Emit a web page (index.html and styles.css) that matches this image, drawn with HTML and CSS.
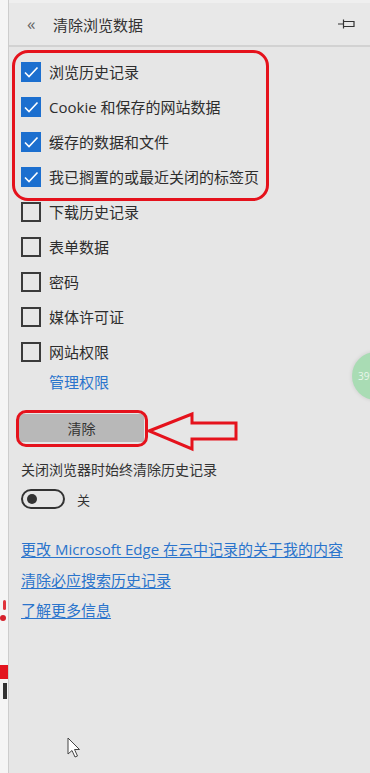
FILE: index.html
```html
<!DOCTYPE html>
<html lang="zh">
<head>
    <meta charset="UTF-8">
    <meta name="viewport" content="width=device-width, initial-scale=1.0">
    <title>清除浏览数据</title>
    <link rel="stylesheet" href="styles.css">
</head>
<body>
  <div class="window">
    <!-- 左侧露出的网页边缘 -->
    <div class="side-strip">
      <span class="deco deco-1"></span>
      <span class="deco deco-2"></span>
      <span class="deco deco-3"></span>
      <span class="deco deco-4"></span>
    </div>

    <div class="panel">
      <div class="panel-header">
        <span class="back">«</span>
        <h1 class="panel-title">清除浏览数据</h1>
        <svg class="pin" width="18" height="12" viewBox="0 0 18 12">
          <path d="M0 6H5M5.5 1.5V10.5M6 3.5H16V8.5H6" fill="none" stroke="#333" stroke-width="1.2"/>
        </svg>
      </div>

      <ul class="option-list">
        <li class="option checked"><span class="box"><svg width="20" height="20" viewBox="0 0 20 20"><path d="M4 10.5L8 14.5L16.5 5.5" fill="none" stroke="#fff" stroke-width="1.6"/></svg></span><span>浏览历史记录</span></li>
        <li class="option checked"><span class="box"><svg width="20" height="20" viewBox="0 0 20 20"><path d="M4 10.5L8 14.5L16.5 5.5" fill="none" stroke="#fff" stroke-width="1.6"/></svg></span><span>Cookie 和保存的网站数据</span></li>
        <li class="option checked"><span class="box"><svg width="20" height="20" viewBox="0 0 20 20"><path d="M4 10.5L8 14.5L16.5 5.5" fill="none" stroke="#fff" stroke-width="1.6"/></svg></span><span>缓存的数据和文件</span></li>
        <li class="option checked"><span class="box"><svg width="20" height="20" viewBox="0 0 20 20"><path d="M4 10.5L8 14.5L16.5 5.5" fill="none" stroke="#fff" stroke-width="1.6"/></svg></span><span>我已搁置的或最近关闭的标签页</span></li>
        <li class="option"><span class="box"></span><span>下载历史记录</span></li>
        <li class="option"><span class="box"></span><span>表单数据</span></li>
        <li class="option"><span class="box"></span><span>密码</span></li>
        <li class="option"><span class="box"></span><span>媒体许可证</span></li>
        <li class="option"><span class="box"></span><span>网站权限</span></li>
      </ul>
      <a class="manage-link" href="#">管理权限</a>

      <button class="clear-btn">清除</button>

      <p class="auto-clear">关闭浏览器时始终清除历史记录</p>
      <div class="toggle-row">
        <span class="toggle"><span class="knob"></span></span>
        <span class="toggle-label">关</span>
      </div>

      <div class="links">
        <a href="#">更改 Microsoft Edge 在云中记录的关于我的内容</a>
        <a href="#">清除必应搜索历史记录</a>
        <a href="#">了解更多信息</a>
      </div>

      <!-- 红色标注 -->
      <div class="mark-box"></div>
      <div class="mark-btn"></div>
      <svg class="mark-arrow" width="96" height="42" viewBox="0 0 96 42">
        <polygon points="3,20 46,3 46,12 90,12 90,28 46,28 46,38" fill="none" stroke="#e5121c" stroke-width="3" stroke-linejoin="miter"/>
      </svg>
    </div>

    <div class="float-ball">39%</div>

    <svg class="cursor" width="14" height="22" viewBox="0 0 14 22">
      <path d="M1 1V17L5 13.5L8 20L10.5 19L7.5 12.5H12.5Z" fill="#fff" stroke="#444" stroke-width="1"/>
    </svg>
  </div>
</body>
</html>
```

FILE: styles.css
```css
/* 全局 */
body {
    margin: 0;
    padding: 0;
    font-family: "Open Sans", "Noto Sans CJK SC", sans-serif;
    color: #2d2d2d;
}

.window {
    position: relative;
    display: flex;
    width: 370px;
    height: 773px;
    overflow: hidden;
    background: #e6e6e6;
}

/* 左边缘 */
.side-strip {
    position: relative;
    width: 8px;
    background: #f5f5f5;
    border-right: 1px solid #cdcdcd;
}

.deco {
    position: absolute;
    left: 0;
    width: 6px;
}
.deco-1 { top: 600px; height: 10px; background: #e0353c; border-radius: 3px; left: 3px; width: 3px; }
.deco-2 { top: 615px; height: 6px; background: #d6212b; border-radius: 50%; }
.deco-3 { top: 665px; height: 14px; background: #e3141e; width: 8px; }
.deco-4 { top: 683px; height: 16px; background: #333; width: 4px; left: 3px; }

/* 面板 */
.panel {
    position: relative;
    flex: 1;
    padding-left: 12px;
}

.panel-header {
    display: flex;
    align-items: center;
    height: 45px;
    margin-left: -12px;
    padding-left: 18px;
    padding-right: 14px;
    background: #e8e8e8;
    border-top: 3px solid #efefef;
    border-bottom: 2px solid #d2d2d2;
    box-sizing: border-box;
    height: 47px;
}

.back {
    font-size: 17px;
    color: #666;
    width: 26px;
    margin-top: -2px;
}

.panel-title {
    flex: 1;
    margin: 0;
    font-size: 15px;
    font-weight: 400;
    color: #333;
}

.pin {
    margin-top: -1px;
}

/* 选项 */
.option-list {
    list-style: none;
    padding: 0;
    margin: 7px 0 0;
}

.option {
    display: flex;
    align-items: center;
    height: 35px;
    font-size: 15px;
}

.box {
    width: 20px;
    height: 20px;
    margin-right: 8px;
    box-sizing: border-box;
    border: 2px solid #3a3a3a;
    flex-shrink: 0;
}

.checked .box {
    border: none;
    background: #1c6fcf;
}

.box svg {
    display: block;
}

.manage-link {
    display: block;
    margin-left: 28px;
    line-height: 26px;
    font-size: 15px;
    color: #2a74cc;
    text-decoration: none;
}

/* 清除按钮 */
.clear-btn {
    display: block;
    margin-top: 19px;
    margin-left: -2px;
    width: 125px;
    height: 28px;
    border: none;
    background: #b8b8b8;
    font-family: inherit;
    font-size: 14px;
    color: #333;
    padding: 0;
}

.auto-clear {
    margin: 18px 0 0;
    font-size: 14px;
    line-height: 20px;
    color: #333;
}

.toggle-row {
    display: flex;
    align-items: center;
    margin-top: 9px;
}

.toggle {
    position: relative;
    width: 44px;
    height: 20px;
    box-sizing: border-box;
    border: 2px solid #333;
    border-radius: 10px;
    margin-right: 12px;
}

.knob {
    position: absolute;
    left: 4px;
    top: 3px;
    width: 10px;
    height: 10px;
    border-radius: 50%;
    background: #333;
}

.toggle-label {
    font-size: 13px;
    color: #333;
}

/* 链接 */
.links {
    margin-top: 25px;
}

.links a {
    display: block;
    font-size: 15px;
    line-height: 30.5px;
    color: #2a74cc;
    text-decoration: underline;
    text-underline-offset: 2px;
}

/* 红色标注 */
.mark-box {
    position: absolute;
    left: 3px;
    top: 50px;
    width: 257px;
    height: 151px;
    box-sizing: border-box;
    border: 3px solid #e5121c;
    border-radius: 16px;
}

.mark-btn {
    position: absolute;
    left: 7px;
    top: 410px;
    width: 132px;
    height: 37px;
    box-sizing: border-box;
    border: 3px solid #e5121c;
    border-radius: 10px;
}

.mark-arrow {
    position: absolute;
    left: 137px;
    top: 411px;
}

/* 右侧悬浮球 */
.float-ball {
    position: absolute;
    left: 352px;
    top: 352px;
    width: 48px;
    height: 48px;
    border-radius: 50%;
    background: #a9dcb4;
    box-shadow: 0 0 4px rgba(0, 0, 0, 0.12);
    color: #e8f6ea;
    font-size: 10px;
    line-height: 48px;
    padding-left: 6px;
    box-sizing: border-box;
}

.cursor {
    position: absolute;
    left: 67px;
    top: 737px;
}
```
